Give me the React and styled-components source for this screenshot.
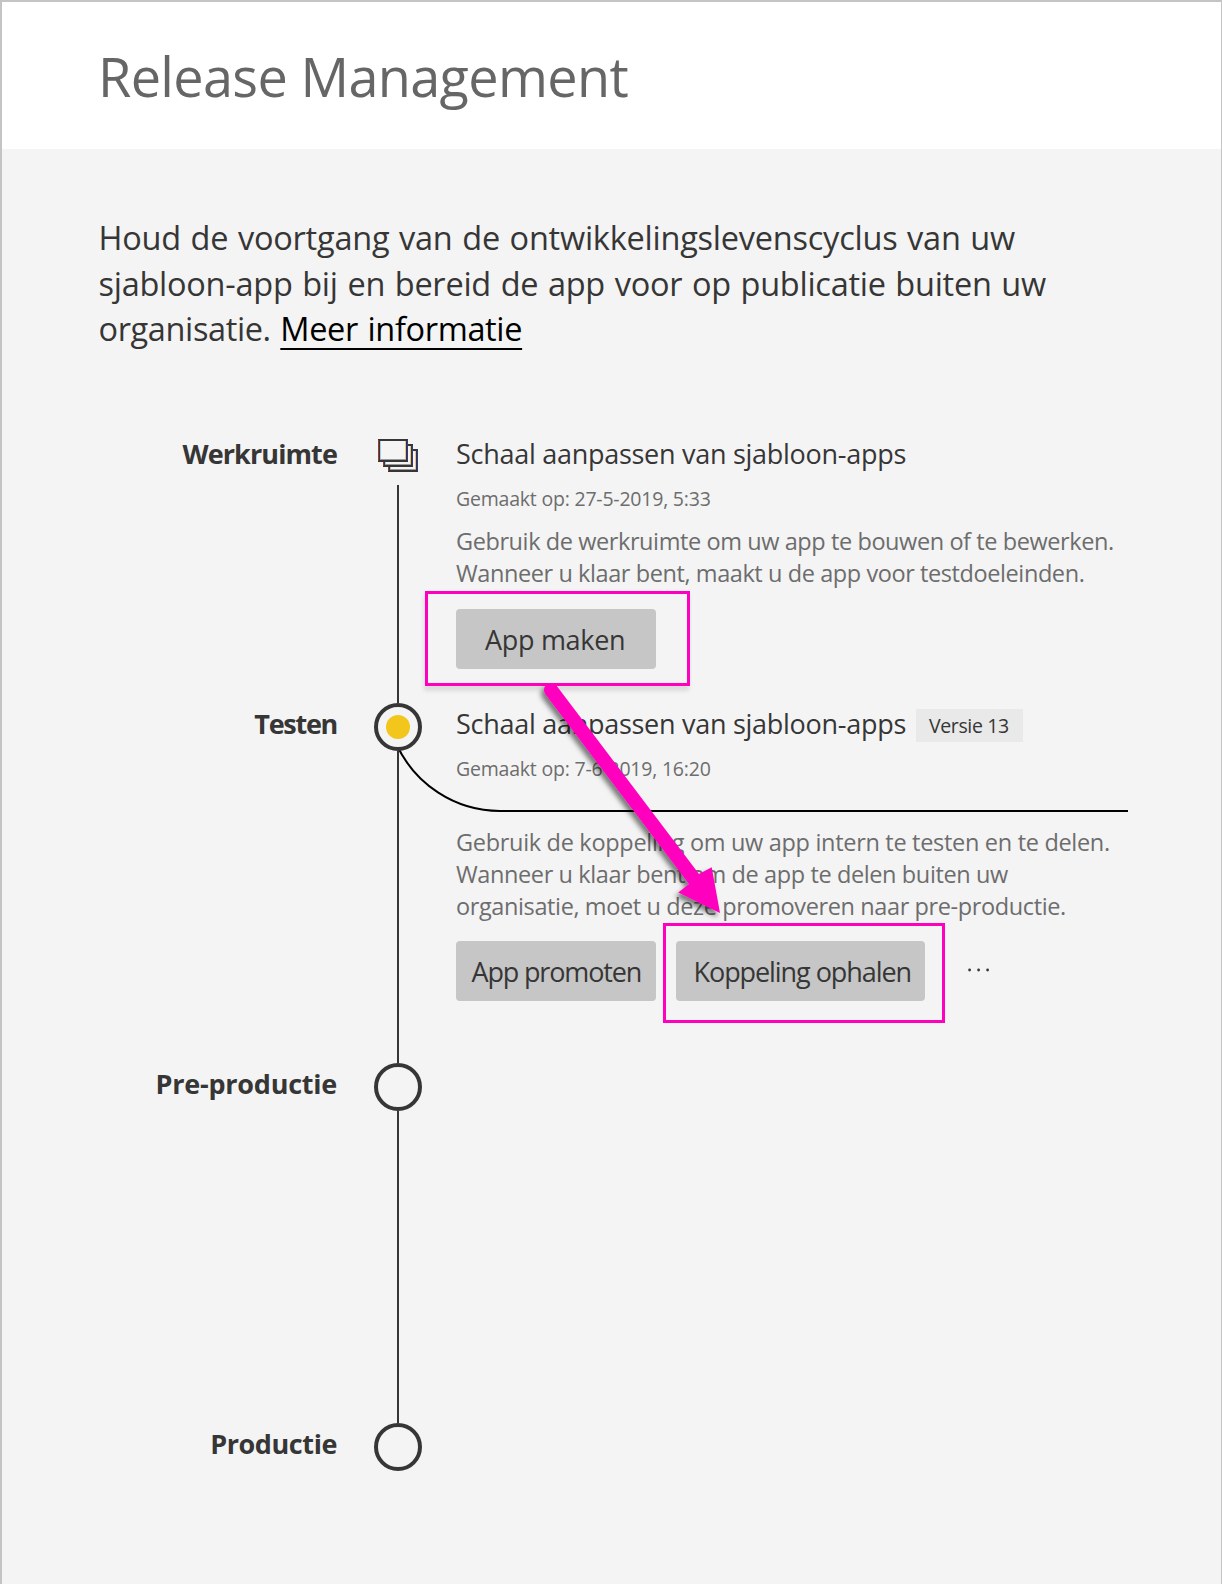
import React from 'react';
import styled, { createGlobalStyle } from 'styled-components';

const ink = '#363636';
const muted = '#6d6d6d';
const accent = '#ff00bf';

const GlobalStyle = createGlobalStyle`
  * { box-sizing: border-box; }
  body {
    margin: 0;
    background: #f4f4f4;
    font-family: "Open Sans", "Noto Sans", sans-serif;
    color: ${ink};
  }
`;

const Page = styled.div`
  width: 1222px;
  height: 1584px;
  border: solid #c4c4c4;
  border-width: 2px 1px 0 2px;
  background: #f4f4f4;
  overflow: hidden;
`;

const Header = styled.header`
  height: 147px;
  padding: 38px 0 0 96px;
  background: #fff;
`;

const PageTitle = styled.h1`
  margin: 0;
  font-size: 54px;
  font-weight: 400;
  line-height: 72px;
  letter-spacing: -0.65px;
  color: #666;
`;

const Intro = styled.p`
  height: 202px;
  margin: 0;
  padding: 66.4px 0 0 96.5px;
  font-size: 32.5px;
  line-height: 45.3px;
  word-spacing: 1.5px;
  color: ${ink};
`;

const Line = styled.span`
  display: block;
  white-space: nowrap;
  letter-spacing: ${(p) => p.$track || 0}px;
`;

const InfoLink = styled.a`
  color: #000;
  letter-spacing: -0.35px;
  text-decoration: underline;
  text-decoration-thickness: 2px;
  text-underline-offset: 7px;
  text-decoration-skip-ink: none;
`;

const Timeline = styled.ol`
  list-style: none;
  margin: 82px 0 0;
  padding: 0;
`;

const Stage = styled.li`
  position: relative;
  display: grid;
  grid-template-columns: 372px 48px 1fr;
  height: ${(p) => p.$height}px;
`;

const StageLabel = styled.div`
  padding: 2.5px 37px 0 0;
  text-align: right;
  font-size: 27px;
  font-weight: 700;
  line-height: 36px;
  white-space: nowrap;
  letter-spacing: ${(p) => p.$track}px;
`;

const Track = styled.div`
  display: flex;
  flex-direction: column;
  align-items: center;
`;

const Rail = styled.div`
  flex: 1;
  width: 2px;
  background: ${ink};
`;

const Node = styled.div`
  display: flex;
  align-items: center;
  justify-content: center;
  width: 48px;
  height: 48px;
  border: 4px solid ${ink};
  border-radius: 50%;
  background: #f4f4f4;
  z-index: 1;
`;

const ActiveDot = styled.div`
  width: 24px;
  height: 24px;
  border-radius: 50%;
  background: #f2c61a;
`;

const IconSlot = styled.div`
  height: 52px;
  padding-top: 6px;
`;

const Content = styled.div`
  padding: 2.5px 0 0 34px;
`;

const TitleRow = styled.div`
  display: flex;
  align-items: flex-start;
  height: 36px;
`;

const StageTitle = styled.h2`
  margin: 0;
  width: 460px;
  font-size: 27px;
  font-weight: 400;
  line-height: 36px;
  letter-spacing: -0.277px;
  white-space: nowrap;
`;

const Version = styled.span`
  width: 107px;
  height: 33px;
  margin-top: 3.5px;
  padding-left: 13px;
  background: #e9e9e9;
  font-size: 19.5px;
  line-height: 33px;
  letter-spacing: -0.366px;
  white-space: nowrap;
`;

const Meta = styled.div`
  margin-top: 15.5px;
  font-size: 19.5px;
  line-height: 24px;
  letter-spacing: -0.21px;
  color: ${muted};
`;

const Description = styled.p`
  margin: ${(p) => p.$gap}px 0 0;
  font-size: 23.5px;
  line-height: 32px;
  color: ${muted};
`;

const Actions = styled.div`
  display: flex;
  gap: 20px;
  margin-top: ${(p) => p.$gap}px;
`;

const ButtonFrame = styled.div`
  position: relative;
  display: flex;
`;

const Button = styled.button`
  width: ${(p) => p.$width}px;
  height: 60px;
  padding: 1px 0 0 ${(p) => p.$inset}px;
  border: 0;
  border-radius: 4px;
  background: #c6c6c6;
  color: ${ink};
  font: 400 27px/59px "Open Sans", "Noto Sans", sans-serif;
  letter-spacing: ${(p) => p.$track}px;
  text-align: left;
  white-space: nowrap;
`;

const MoreButton = styled.button`
  display: flex;
  align-items: center;
  height: 58px;
  margin-left: 23px;
  padding: 0;
  border: 0;
  background: none;
`;

const Highlight = styled.div`
  position: absolute;
  inset: ${(p) => p.$inset};
  border: 3px solid ${accent};
  box-shadow: ${(p) => (p.$shadow ? '-1px 5px 4px rgba(0, 0, 0, 0.1)' : 'none')};
  pointer-events: none;
`;

const Branch = styled.svg`
  position: absolute;
  left: 392px;
  top: 40px;
`;

const Arrow = styled.svg`
  position: absolute;
  left: 528px;
  top: 245px;
  z-index: 2;
  pointer-events: none;
`;

function WorkspaceIcon() {
  return (
    <svg width="40" height="33" viewBox="0 0 40 33" shapeRendering="crispEdges">
      {[[10, 10], [5, 5], [0, 0]].map(([x, y]) => (
        <g key={x} transform={`translate(${x} ${y})`}>
          <rect width="30" height="23" fill={ink} />
          <rect x="2" y="2" width="26" height="19" fill="#f4f4f4" />
          <rect y="1" width="1" height="21" fill="#a3381f" />
          <rect x="2" y="2" width="1" height="19" fill="#9bd0f3" />
          <rect x="27" y="2" width="1" height="19" fill="#f3c08a" />
          <rect x="29" y="1" width="1" height="21" fill="#2b3d8c" />
          <rect x="2" y="20" width="26" height="1" fill="#9a9a9a" />
        </g>
      ))}
    </svg>
  );
}

function MoreIcon() {
  return (
    <svg width="22" height="4" viewBox="0 0 22 4" fill={ink}>
      <circle cx="1.6" cy="2" r="1.4" />
      <circle cx="10.6" cy="2" r="1.4" />
      <circle cx="19.6" cy="2" r="1.4" />
    </svg>
  );
}

export default function App() {
  return (
    <Page>
      <GlobalStyle />
      <Header>
        <PageTitle>Release Management</PageTitle>
      </Header>
      <Intro>
        <Line $track={-0.237}>Houd de voortgang van de ontwikkelingslevenscyclus van uw</Line>
        <Line $track={-0.26}>sjabloon-app bij en bereid de app voor op publicatie buiten uw</Line>
        <Line $track={-0.38}>
          organisatie. <InfoLink>Meer informatie</InfoLink>
        </Line>
      </Intro>

      <Timeline>
        <Stage $height={270}>
          <StageLabel $track={-0.9}>Werkruimte</StageLabel>
          <Track>
            <IconSlot><WorkspaceIcon /></IconSlot>
            <Rail />
          </Track>
          <Content>
            <TitleRow>
              <StageTitle>Schaal aanpassen van sjabloon-apps</StageTitle>
            </TitleRow>
            <Meta>Gemaakt op: 27-5-2019, 5:33</Meta>
            <Description $gap={13.5}>
              <Line $track={-0.411}>Gebruik de werkruimte om uw app te bouwen of te bewerken.</Line>
              <Line $track={-0.412}>Wanneer u klaar bent, maakt u de app voor testdoeleinden.</Line>
            </Description>
            <Actions $gap={20.5}>
              <ButtonFrame>
                <Button $width={200} $inset={29} $track={-0.309}>App maken</Button>
                <Highlight $inset="-18px -34px -17px -31px" $shadow />
              </ButtonFrame>
            </Actions>
          </Content>
          <Arrow width="210" height="260" viewBox="530 678 210 260">
            <defs>
              <filter id="arrowShadow" x="-20%" y="-20%" width="140%" height="140%">
                <feDropShadow dx="-3" dy="4" stdDeviation="2.5" floodColor="#000" floodOpacity="0.5" />
              </filter>
              <clipPath id="belowFrame">
                <rect x="530" y="685" width="210" height="260" />
              </clipPath>
            </defs>
            <g clipPath="url(#belowFrame)">
              <path
                d="M545.4 694.2A7 7 0 0 1 556.6 685.8L699 874L711.7 867.3L720 913L678.3 892.5L689 884Z"
                fill={accent}
                filter="url(#arrowShadow)"
              />
            </g>
          </Arrow>
        </Stage>

        <Stage $height={360}>
          <Branch width="740" height="72" viewBox="394 743 740 72" fill="none">
            <path d="M396 743A114 114 0 0 0 500 811H1128" stroke="#000" strokeWidth="2" />
          </Branch>
          <StageLabel $track={-1.3}>Testen</StageLabel>
          <Track>
            <Node><ActiveDot /></Node>
            <Rail />
          </Track>
          <Content>
            <TitleRow>
              <StageTitle>Schaal aanpassen van sjabloon-apps</StageTitle>
              <Version>Versie 13</Version>
            </TitleRow>
            <Meta>Gemaakt op: 7-6-2019, 16:20</Meta>
            <Description $gap={44.5}>
              <Line $track={-0.306}>Gebruik de koppeling om uw app intern te testen en te delen.</Line>
              <Line $track={-0.385}>Wanneer u klaar bent om de app te delen buiten uw</Line>
              <Line $track={-0.384}>organisatie, moet u deze promoveren naar pre-productie.</Line>
            </Description>
            <Actions $gap={19.5}>
              <Button $width={200} $inset={15.5} $track={-1.159}>App promoten</Button>
              <ButtonFrame>
                <Button $width={249} $inset={17.5} $track={-1.071}>Koppeling ophalen</Button>
                <Highlight $inset="-18px -20px -22px -13px" />
              </ButtonFrame>
              <MoreButton aria-label="Meer opties"><MoreIcon /></MoreButton>
            </Actions>
          </Content>
        </Stage>

        <Stage $height={360}>
          <StageLabel $track={-0.241}>Pre-productie</StageLabel>
          <Track>
            <Node />
            <Rail />
          </Track>
        </Stage>

        <Stage $height={48}>
          <StageLabel $track={-0.413}>Productie</StageLabel>
          <Track>
            <Node />
          </Track>
        </Stage>
      </Timeline>
    </Page>
  );
}
